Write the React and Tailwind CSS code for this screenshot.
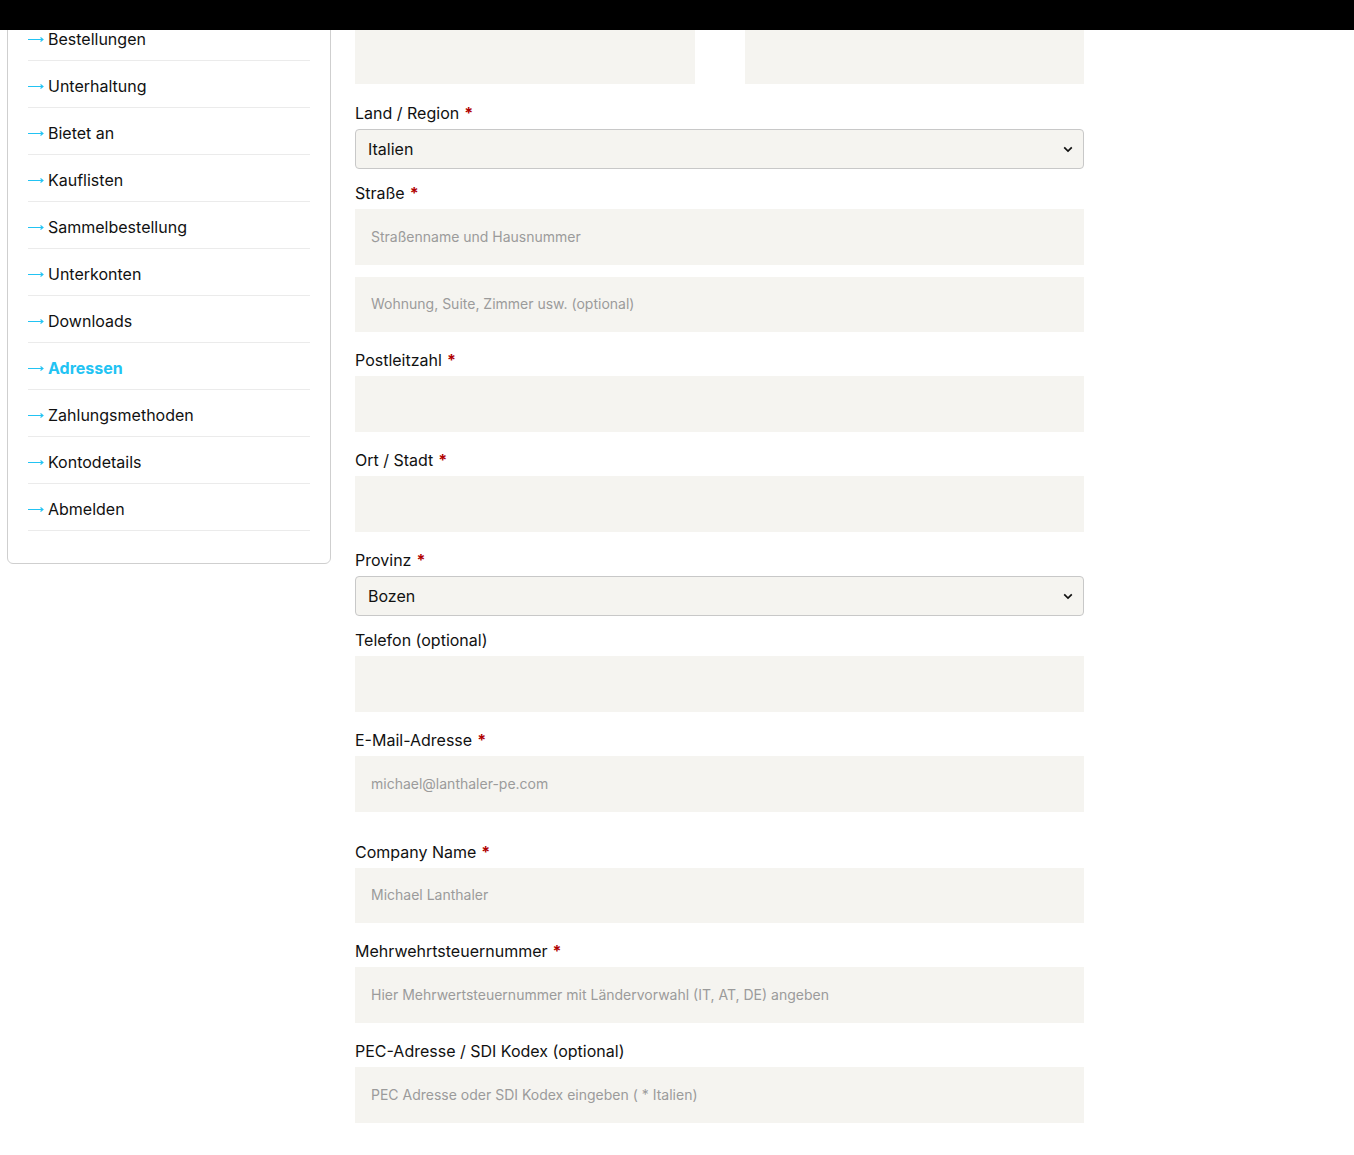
import React from 'react';

const navItems = [
  'Bestellungen', 'Unterhaltung', 'Bietet an', 'Kauflisten', 'Sammelbestellung',
  'Unterkonten', 'Downloads', 'Adressen', 'Zahlungsmethoden', 'Kontodetails', 'Abmelden',
];

const Arrow = () => (
  <svg className="mr-[4px] shrink-0" width="16" height="7" viewBox="0 0 16 7" fill="none">
    <path d="M0 3.5h15M12.5 1.5 15 3.5 12.5 5.5" stroke="#22c3f3" strokeWidth="1.1" />
  </svg>
);

const Label = ({ text, required }) => (
  <label className="block text-[16px] leading-[24px] text-[#111]">
    {text}{required && <span className="ml-[5px] font-bold text-[#b00000]">*</span>}
  </label>
);

const Input = ({ placeholder, className = 'h-[56px]' }) => (
  <input
    type="text"
    placeholder={placeholder}
    className={`block w-full bg-[#f5f4f0] px-4 pb-[2px] text-[14px] text-[#111] placeholder:text-[#9b9b9b] outline-none ${className}`}
  />
);

const Select = ({ value }) => (
  <div className="relative mt-1 mb-3">
    <select
      defaultValue={value}
      className="block w-full h-[40px] appearance-none rounded-[4px] border border-[#c8c8c8] bg-[#f5f4f0] pl-3 pr-8 text-[16px] text-[#111] outline-none"
    >
      <option>{value}</option>
    </select>
    <svg className="pointer-events-none absolute right-[11px] top-[17px]" width="10" height="7" viewBox="0 0 10 7" fill="none">
      <path d="M1.2 1.4 5 5 8.8 1.4" stroke="#111" strokeWidth="1.7" />
    </svg>
  </div>
);

const Field = ({ label, required, placeholder, extra = '', h = 'h-[56px]' }) => (
  <div className={`mb-4 ${extra}`}>
    <Label text={label} required={required} />
    <div className="mt-1"><Input placeholder={placeholder} className={h} /></div>
  </div>
);

export default function App() {
  return (
    <div className="relative min-h-[1155px] bg-white" style={{ fontFamily: 'Inter, "Noto Sans", sans-serif' }}>
      {/* sticky header */}
      <div className="fixed left-0 right-0 top-0 z-10 h-[30px] bg-black" />

      <div className="flex items-start pl-[7px]">
        {/* account nav */}
        <aside className="w-[324px] shrink-0 -mt-[11px] rounded-[6px] border border-[#cfcfcf] px-5 pt-[24px] pb-[32px]">
          <ul>
            {navItems.map(item => (
              <li key={item} className="flex h-[47px] items-center border-b border-[#ebebeb] pt-[4px] text-[16px]">
                <Arrow />
                <span className={item === 'Adressen' ? 'font-bold text-[#22c3f3]' : 'text-[#111]'}>{item}</span>
              </li>
            ))}
          </ul>
        </aside>

        {/* address form */}
        <main className="ml-[24px] w-[729px] pt-[28px]">
          <div className="mb-[17px] flex gap-[50px]">
            <Input className="h-[56px] flex-1" />
            <Input className="h-[56px] flex-1" />
          </div>

          <Label text="Land / Region" required />
          <Select value="Italien" />

          <div className="mb-4">
            <Label text="Straße" required />
            <div className="mt-1"><Input placeholder="Straßenname und Hausnummer" /></div>
            <div className="mt-3"><Input placeholder="Wohnung, Suite, Zimmer usw. (optional)" className="h-[55px]" /></div>
          </div>

          <Field label="Postleitzahl" required />
          <Field label="Ort / Stadt" required />

          <Label text="Provinz" required />
          <Select value="Bozen" />

          <Field label="Telefon (optional)" />
          <Field label="E-Mail-Adresse" required placeholder="michael@lanthaler-pe.com" extra="mb-[28px]" />
          <Field label="Company Name" required placeholder="Michael Lanthaler" h="h-[55px]" />
          <Field label="Mehrwehrtsteuernummer" required placeholder="Hier Mehrwertsteuernummer mit Ländervorwahl (IT, AT, DE) angeben" />
          <Field label="PEC-Adresse / SDI Kodex (optional)" placeholder="PEC Adresse oder SDI Kodex eingeben ( * Italien)" />
        </main>
      </div>
    </div>
  );
}
